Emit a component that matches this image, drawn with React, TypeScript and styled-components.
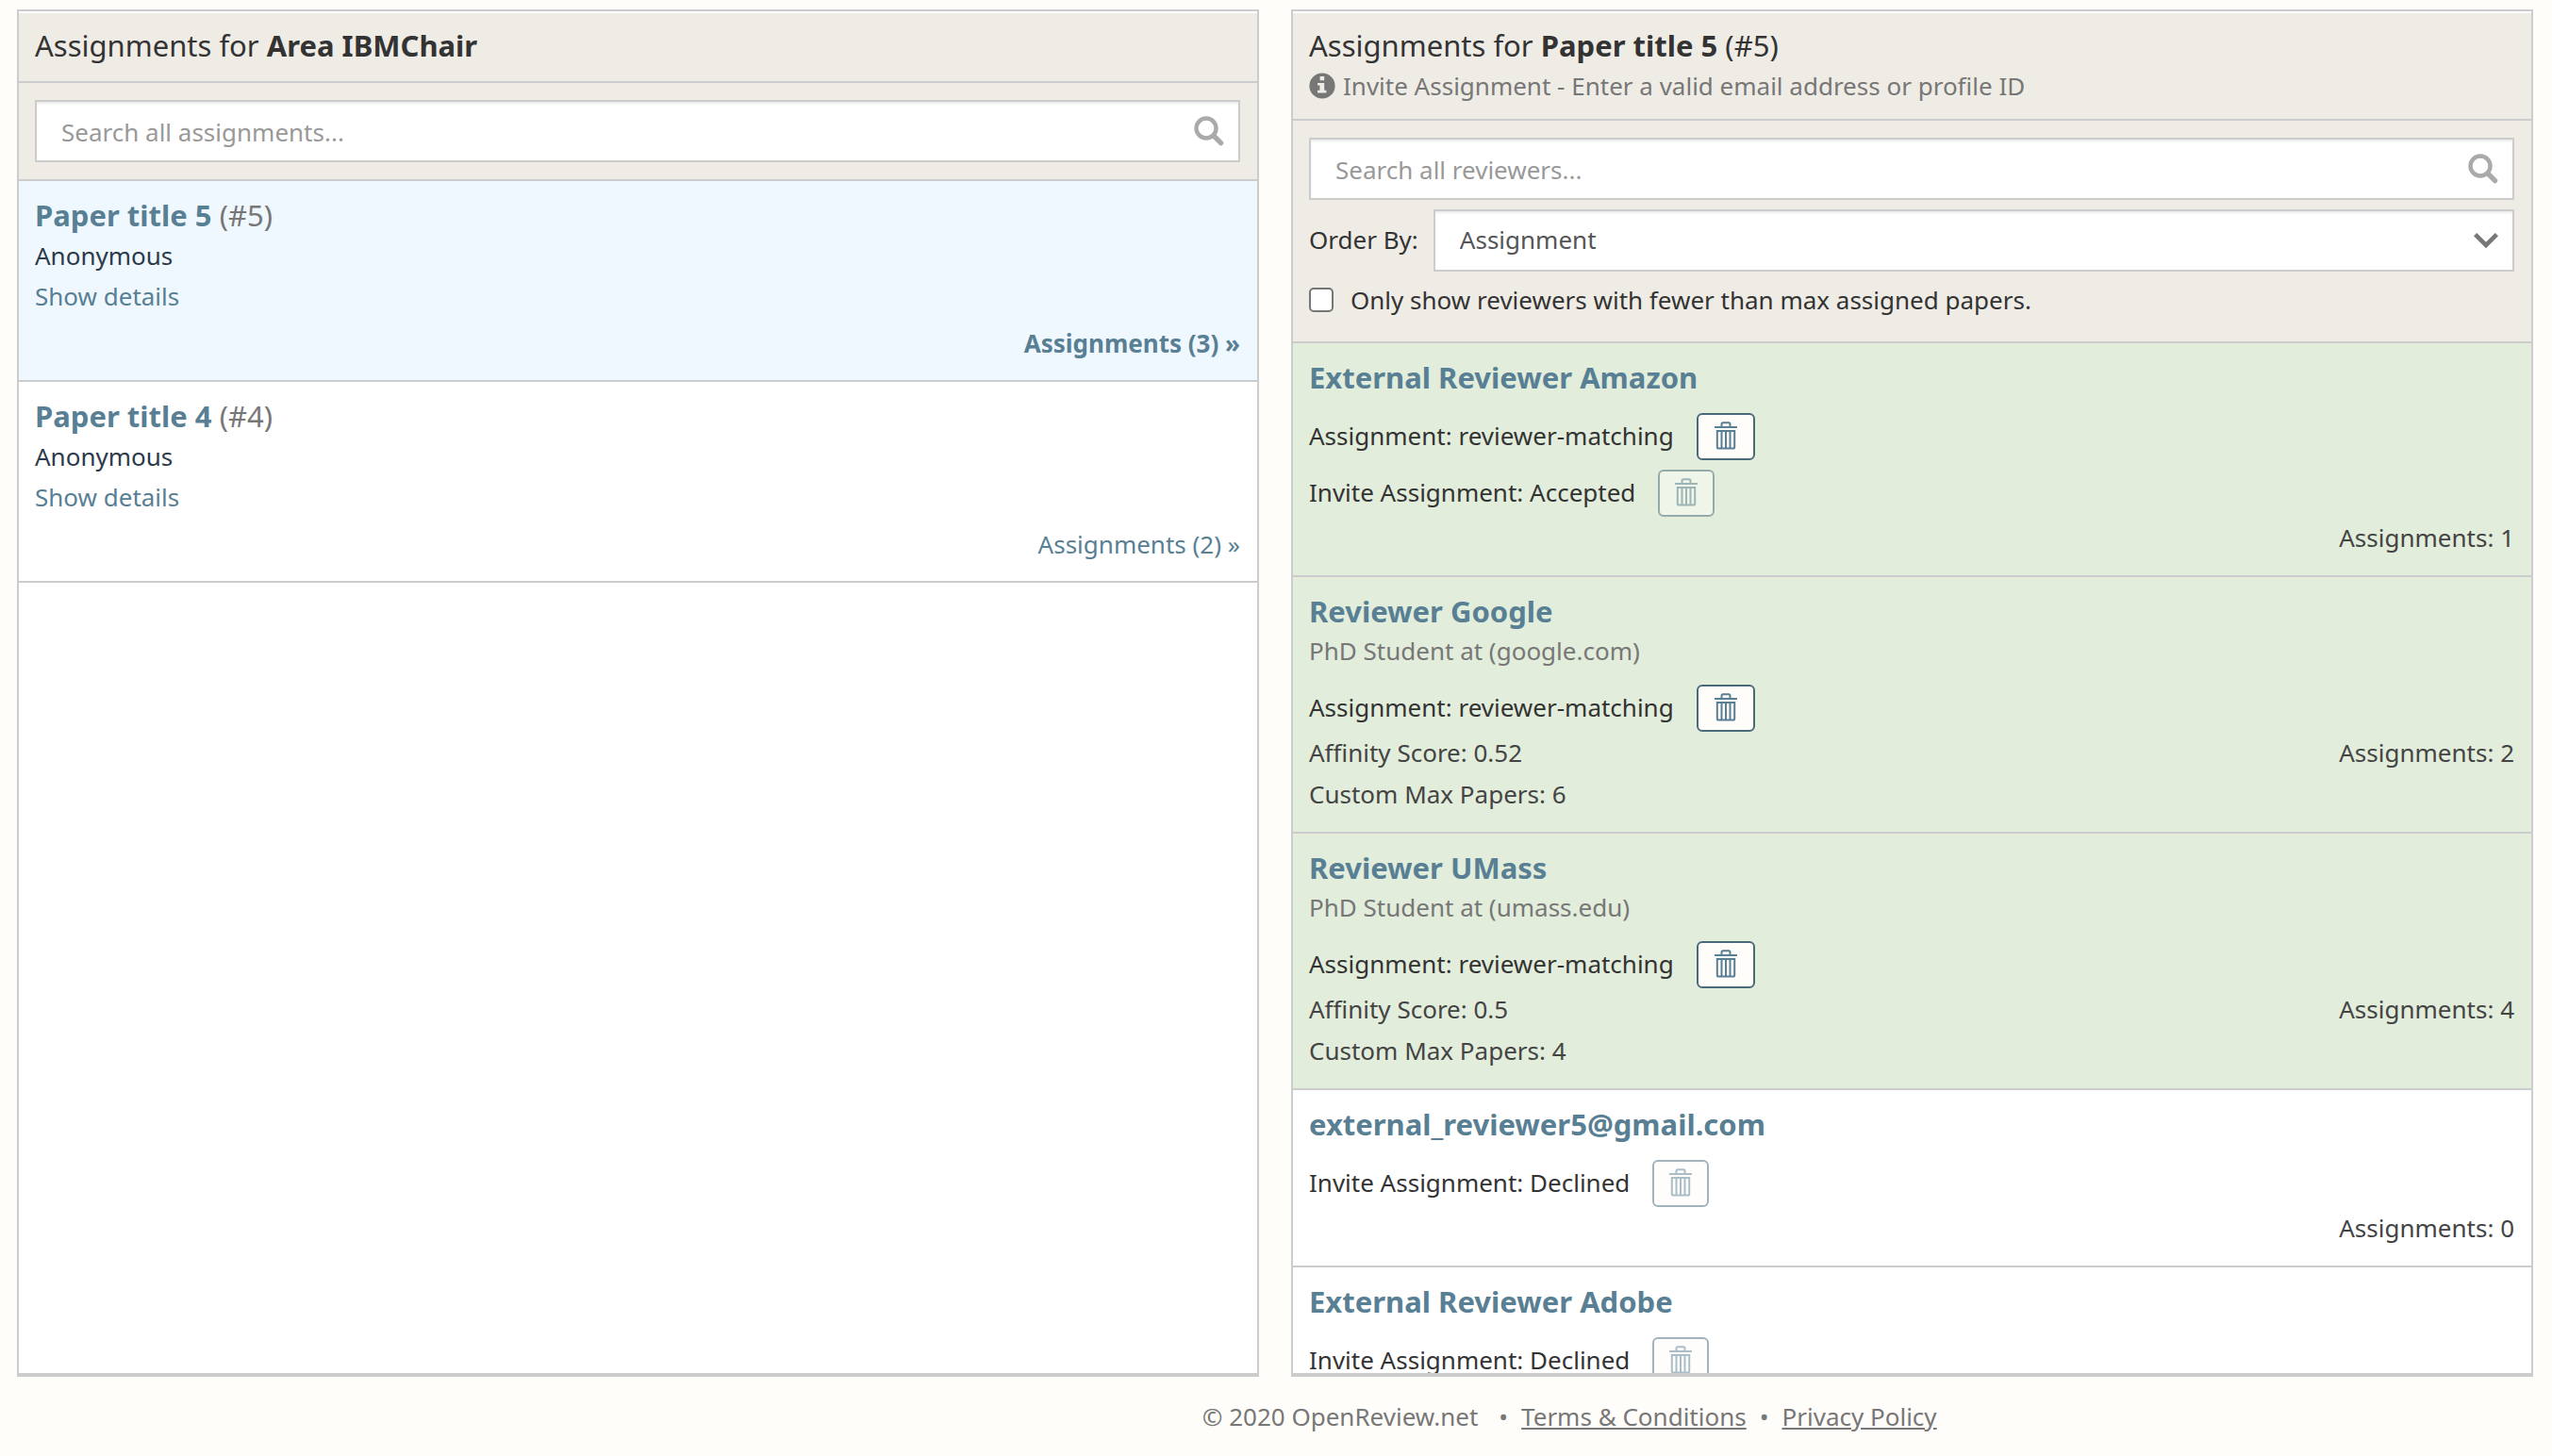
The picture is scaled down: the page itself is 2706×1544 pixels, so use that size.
import React, { useState } from "react";
import styled, { createGlobalStyle } from "styled-components";

const color = {
  page: "#fffdfa",
  bar: "#efece5",
  line: "#cccccc",
  link: "#587f93",
  linkDark: "#4a6a7a",
  text: "#333333",
  muted: "#777777",
  stat: "#444444",
  author: "#2c3a4a",
  active: "#f0f8ff",
  assigned: "#e2eddb",
};

const GlobalStyle = createGlobalStyle`
  *, *::before, *::after { box-sizing: border-box; }
  body {
    margin: 0;
    background: ${color.page};
    color: ${color.text};
    font-family: "Noto Sans", sans-serif;
    font-size: 26px;
    line-height: 40px;
  }
  h2, h3, p, ul { margin: 0; padding: 0; font-weight: 400; }
  ul { list-style: none; }
`;

const Page = styled.div`
  display: flex;
  flex-direction: column;
  height: 100vh;
`;

const Columns = styled.main`
  flex: 1;
  min-height: 0;
  display: grid;
  grid-template-columns: minmax(0, 1fr) minmax(0, 1fr);
  gap: 34px;
  padding: 10px 20px 0 18px;
`;

const Panel = styled.section`
  display: flex;
  flex-direction: column;
  min-height: 0;
  overflow: hidden;
  padding-top: 2px;
  background: #fff;
  border: 2px solid ${color.line};
  border-bottom-width: 4px;
`;

const Header = styled.header`
  flex: none;
  padding: 12px 18px 16px 17px;
  background: ${color.bar};
  border-bottom: 2px solid ${color.line};
`;

const Heading = styled.h2`
  font-size: 31px;
  line-height: 44px;
`;

const Hint = styled.p`
  display: flex;
  align-items: center;
  gap: 8px;
  padding-top: 2px;
  line-height: 38px;
  color: ${color.muted};
`;

const Filters = styled.form<{ $tall?: boolean }>`
  flex: none;
  display: grid;
  gap: 10px;
  padding: 18px 18px ${(p) => (p.$tall ? 24 : 18)}px 17px;
  background: ${color.bar};
  border-bottom: 2px solid ${color.line};
`;

const Field = styled.div`
  position: relative;
  flex: 1;
  display: flex;

  svg {
    position: absolute;
    top: 17px;
    right: 17px;
    pointer-events: none;
  }
`;

const control = `
  width: 100%;
  height: 66px;
  margin: 0;
  padding: 2px 64px 0 26px;
  border: 2px solid ${color.line};
  border-radius: 0;
  background: #fff;
  box-shadow: inset 0 2px 2px rgba(0, 0, 0, 0.075);
  color: #555;
  font: inherit;
  appearance: none;
`;

const SearchInput = styled.input`
  ${control}
  &::placeholder { color: #999; opacity: 1; }
`;

const Select = styled.select`
  ${control}
  padding-top: 0;
  padding-bottom: 2px;
`;

const OrderRow = styled.div`
  display: flex;
  align-items: center;
  gap: 16px;
`;

const OrderLabel = styled.label`
  padding-bottom: 2px;
`;

const CheckLabel = styled.label`
  display: flex;
  align-items: center;
  gap: 18px;
`;

const Checkbox = styled.input`
  appearance: none;
  width: 26px;
  height: 26px;
  margin: 0;
  border: 2px solid #767676;
  border-radius: 5px;
  background: #fff;
  &:checked { background: ${color.link}; }
`;

const List = styled.ul`
  flex: 1;
  min-height: 0;
  overflow-y: auto;
  scrollbar-width: none;
`;

const PaperItem = styled.li<{ $active?: boolean }>`
  padding: 16px 18px 17px 17px;
  background: ${(p) => (p.$active ? color.active : "#fff")};
  border-bottom: 2px solid ${color.line};
`;

const ReviewerItem = styled.li<{ $assigned?: boolean }>`
  padding: 16px 18px 18px 17px;
  background: ${(p) => (p.$assigned ? color.assigned : "#fff")};
  border-bottom: 2px solid ${color.line};
`;

const Title = styled.h3`
  margin-bottom: 2px;
  font-size: 31px;
  line-height: 40px;
  color: ${color.muted};
`;

const Link = styled.a<{ $bold?: boolean }>`
  color: ${color.link};
  font-weight: ${(p) => (p.$bold ? 700 : 400)};
  text-decoration: none;
`;

const Author = styled.p`
  line-height: 42px;
  color: ${color.author};
`;

const Details = styled.p`
  line-height: 44px;
`;

const PaperFooter = styled.p`
  margin-top: 6px;
  line-height: 44px;
  text-align: right;
`;

const Subtitle = styled.p`
  color: ${color.muted};
`;

const Edges = styled.div`
  display: grid;
  gap: 10px;
  padding-top: 16px;
`;

const Edge = styled.div`
  display: flex;
  align-items: flex-start;
  gap: 24px;
  line-height: 48px;
`;

const TrashButton = styled.button`
  display: flex;
  justify-content: center;
  width: 62px;
  height: 50px;
  padding: 7px 0 0;
  border: 2px solid ${color.linkDark};
  border-radius: 6px;
  background: ${color.page};
  color: ${color.link};
  &:disabled { width: 60px; opacity: 0.5; }
`;

const Stats = styled.div`
  display: flex;
  justify-content: space-between;
  line-height: 44px;
  color: ${color.stat};
`;

const Count = styled.p`
  margin-left: auto;
`;

const Footer = styled.footer`
  flex: none;
  display: flex;
  justify-content: center;
  gap: 14px;
  padding: 22px 0 22px 23%;
  color: ${color.muted};
`;

const Copyright = styled.span`
  margin-right: 8px;
`;

const FooterLink = styled.a`
  color: inherit;
  text-decoration: underline;
`;

const SearchIcon = () => (
  <svg width="32" height="32" viewBox="0 0 32 32" fill="none" stroke="#aaa" aria-hidden="true">
    <circle cx="13" cy="13" r="10.5" strokeWidth="4.4" />
    <path d="M21 21 L28.6 28.6" strokeWidth="5.4" strokeLinecap="round" />
  </svg>
);

const ChevronIcon = () => (
  <svg width="26" height="32" viewBox="0 0 26 32" fill="none" stroke="#777" aria-hidden="true">
    <path d="M1.6 9.6 L13 21 L24.4 9.6" strokeWidth="4.6" />
  </svg>
);

const InfoIcon = () => (
  <svg width="28" height="28" viewBox="0 0 28 28" aria-hidden="true">
    <circle cx="14" cy="14" r="13.6" fill={color.muted} />
    <path
      d="M11.6 4h4.6v4.2h-4.6z M9 11h7.2v7.8h2.2v2.8H9v-2.8h2.4v-5.2H9z"
      fill={color.bar}
    />
  </svg>
);

const TrashIcon = () => (
  <svg width="26" height="30" viewBox="0 0 26 30" fill="none" stroke="currentColor" strokeWidth="2" aria-hidden="true">
    <path d="M8.5 6 V3 Q8.5 1.2 10 1.2 H16 Q17.5 1.2 17.5 3 V6" />
    <path d="M1 6 H25" />
    <path d="M3.8 10 H22.2 V27 Q22.2 28.6 20.6 28.6 H5.4 Q3.8 28.6 3.8 27 Z" />
    <path d="M8.5 10 V28 M13 10 V28 M17.5 10 V28" />
  </svg>
);

const papers = [
  { number: 5, active: true, count: 3 },
  { number: 4, active: false, count: 2 },
];

interface Reviewer {
  name: string;
  position?: string;
  edges: { label: string; locked?: boolean }[];
  details?: string[];
  count: number;
  assigned?: boolean;
}

const matching = { label: "Assignment: reviewer-matching" };
const invite = (status: string) => ({ label: `Invite Assignment: ${status}`, locked: true });

const reviewers: Reviewer[] = [
  { name: "External Reviewer Amazon", edges: [matching, invite("Accepted")], count: 1, assigned: true },
  {
    name: "Reviewer Google",
    position: "PhD Student at (google.com)",
    edges: [matching],
    details: ["Affinity Score: 0.52", "Custom Max Papers: 6"],
    count: 2,
    assigned: true,
  },
  {
    name: "Reviewer UMass",
    position: "PhD Student at (umass.edu)",
    edges: [matching],
    details: ["Affinity Score: 0.5", "Custom Max Papers: 4"],
    count: 4,
    assigned: true,
  },
  { name: "external_reviewer5@gmail.com", edges: [invite("Declined")], count: 0 },
  { name: "External Reviewer Adobe", edges: [invite("Declined")], count: 0 },
];

export default function App() {
  const [onlyAvailable, setOnlyAvailable] = useState(false);

  return (
    <>
      <GlobalStyle />
      <Page>
        <Columns>
          <Panel>
            <Header>
              <Heading>
                Assignments for <strong>Area IBMChair</strong>
              </Heading>
            </Header>
            <Filters>
              <Field>
                <SearchInput type="text" aria-label="Search all assignments" placeholder="Search all assignments..." />
                <SearchIcon />
              </Field>
            </Filters>
            <List>
              {papers.map((paper) => (
                <PaperItem key={paper.number} $active={paper.active}>
                  <Title>
                    <Link href="#" $bold>
                      Paper title {paper.number}
                    </Link>{" "}
                    (#{paper.number})
                  </Title>
                  <Author>Anonymous</Author>
                  <Details>
                    <Link href="#">Show details</Link>
                  </Details>
                  <PaperFooter>
                    <Link href="#" $bold={paper.active}>
                      Assignments ({paper.count}) »
                    </Link>
                  </PaperFooter>
                </PaperItem>
              ))}
            </List>
          </Panel>

          <Panel>
            <Header>
              <Heading>
                Assignments for <strong>Paper title 5</strong> (#5)
              </Heading>
              <Hint>
                <InfoIcon />
                Invite Assignment - Enter a valid email address or profile ID
              </Hint>
            </Header>
            <Filters $tall>
              <Field>
                <SearchInput type="text" aria-label="Search all reviewers" placeholder="Search all reviewers..." />
                <SearchIcon />
              </Field>
              <OrderRow>
                <OrderLabel htmlFor="order-by">Order By:</OrderLabel>
                <Field>
                  <Select id="order-by" defaultValue="Assignment">
                    <option>Assignment</option>
                    <option>Affinity Score</option>
                  </Select>
                  <ChevronIcon />
                </Field>
              </OrderRow>
              <CheckLabel>
                <Checkbox
                  type="checkbox"
                  checked={onlyAvailable}
                  onChange={(e) => setOnlyAvailable(e.target.checked)}
                />
                Only show reviewers with fewer than max assigned papers.
              </CheckLabel>
            </Filters>
            <List>
              {reviewers.map((r) => (
                <ReviewerItem key={r.name} $assigned={r.assigned}>
                  <Title>
                    <Link href="#" $bold>
                      {r.name}
                    </Link>
                  </Title>
                  {r.position && <Subtitle>{r.position}</Subtitle>}
                  <Edges>
                    {r.edges.map((edge) => (
                      <Edge key={edge.label}>
                        <span>{edge.label}</span>
                        <TrashButton type="button" aria-label="Delete" disabled={edge.locked}>
                          <TrashIcon />
                        </TrashButton>
                      </Edge>
                    ))}
                  </Edges>
                  <Stats>
                    <div>
                      {r.details?.map((line) => (
                        <p key={line}>{line}</p>
                      ))}
                    </div>
                    <Count>Assignments: {r.count}</Count>
                  </Stats>
                </ReviewerItem>
              ))}
            </List>
          </Panel>
        </Columns>
        <Footer>
          <Copyright>© 2020 OpenReview.net</Copyright>
          <span>•</span>
          <FooterLink href="#">Terms &amp; Conditions</FooterLink>
          <span>•</span>
          <FooterLink href="#">Privacy Policy</FooterLink>
        </Footer>
      </Page>
    </>
  );
}
